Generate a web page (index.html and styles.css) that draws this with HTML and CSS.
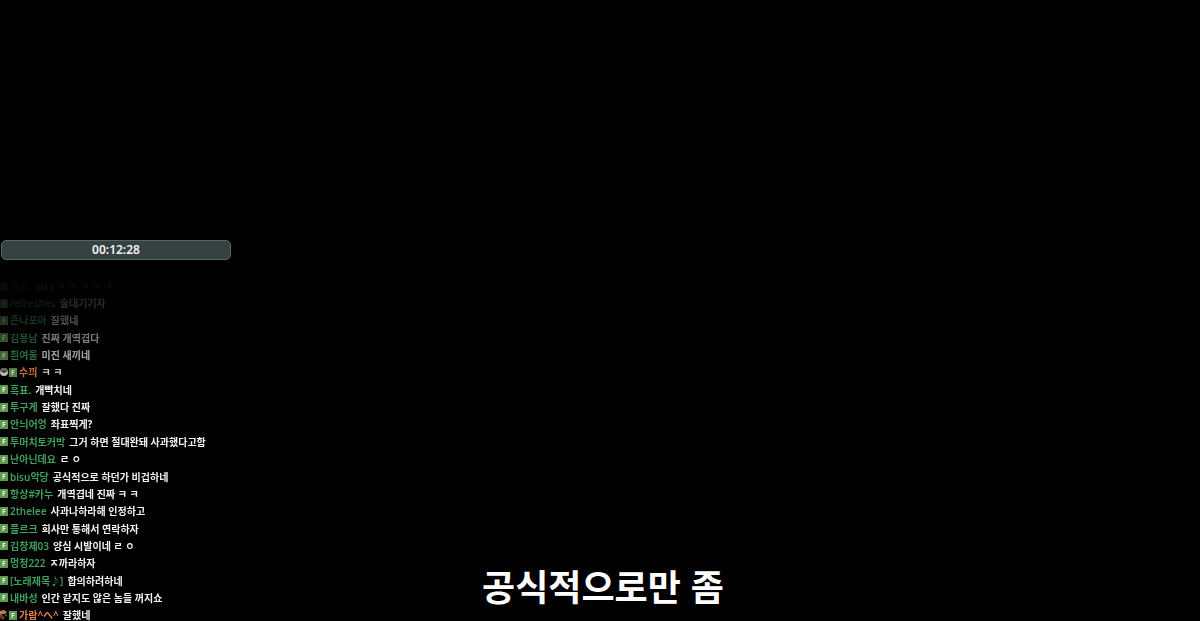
FILE: index.html
```html
<!DOCTYPE html>
<html lang="ko">
<head>
  <meta charset="UTF-8">
  <title>방송 채팅</title>
  <link rel="stylesheet" href="styles.css">
</head>

<body>
  <div class="screen">
    <aside class="overlay">
      <div class="timer">00:12:28</div>

      <ul class="chat">
        <li><i class="fan">F</i><span class="name">흑표.</span><span class="msg">아니 ㅋ ㅋ ㅋ ㅋ ㅋ</span></li>
        <li><i class="fan">F</i><span class="name">refreshes</span><span class="msg">술대기기자</span></li>
        <li><i class="fan">F</i><span class="name">존나포아</span><span class="msg">잘했네</span></li>
        <li><i class="fan">F</i><span class="name">김봉남</span><span class="msg">진짜 개역겹다</span></li>
        <li><i class="fan">F</i><span class="name">흰여울</span><span class="msg">미진 새끼네</span></li>
        <li>
          <svg class="badge" viewBox="0 0 9 10">
            <circle cx="4" cy="5" r="4" fill="#d8d4cc"/>
            <path d="M0 4Q4 7 8 4L7 2Q4 0 1 2Z" fill="#77736e"/>
            <path d="M2 4L4 6L6 4Z" fill="#322e2b"/>
          </svg>
          <i class="fan">F</i><span class="name sub">수끠</span><span class="msg">ㅋ ㅋ</span>
        </li>
        <li><i class="fan">F</i><span class="name">흑표.</span><span class="msg">개빡치네</span></li>
        <li><i class="fan">F</i><span class="name">투구게</span><span class="msg">잘했다 진짜</span></li>
        <li><i class="fan">F</i><span class="name">안늬어엉</span><span class="msg">좌표찍게?</span></li>
        <li><i class="fan">F</i><span class="name">투머치토커박</span><span class="msg">그거 하면 절대완돼 사과했다고함</span></li>
        <li><i class="fan">F</i><span class="name">난아닌데요</span><span class="msg">ㄹ ㅇ</span></li>
        <li><i class="fan">F</i><span class="name">bisu악당</span><span class="msg">공식적으로 하던가 비겁하네</span></li>
        <li><i class="fan">F</i><span class="name">항상#카누</span><span class="msg">개역겹네 진짜 ㅋ ㅋ</span></li>
        <li><i class="fan">F</i><span class="name">2thelee</span><span class="msg">사과나하라해 인정하고</span></li>
        <li><i class="fan">F</i><span class="name">플르크</span><span class="msg">회사만 통해서 연락하자</span></li>
        <li><i class="fan">F</i><span class="name">김창제03</span><span class="msg">양심 시발이네 ㄹ ㅇ</span></li>
        <li><i class="fan">F</i><span class="name">멍청222</span><span class="msg">ㅈ까라하자</span></li>
        <li><i class="fan">F</i><span class="name">[노래제목♪]</span><span class="msg">합의하려하네</span></li>
        <li><i class="fan">F</i><span class="name">내바성</span><span class="msg">인간 같지도 않은 놈들 꺼지쇼</span></li>
        <li>
          <svg class="badge" viewBox="0 0 9 10">
            <path d="M0 1L4 0L7 2L5 4L2 4L0 6Z" fill="#c47a43"/>
            <path d="M0 5L3 5L5 8L3 10L0 8Z" fill="#5e3b22"/>
            <path d="M5 4L7 5L6 7Z" fill="#8c8a7c"/>
          </svg>
          <i class="fan">F</i><span class="name sub">가람^ヘ^</span><span class="msg">잘했네</span>
        </li>
      </ul>
    </aside>

    <p class="caption">공식적으로만 좀</p>
  </div>
</body>
</html>
```

FILE: styles.css
```css
body {
  margin: 0;
  background-color: #000;
  color: #f2f2f2;
  font-family: "Noto Sans", "Noto Sans CJK KR", sans-serif;
}

.screen {
  display: grid;
  grid-template-columns: 232px 1fr 232px;
  height: 100vh;
  overflow: hidden;
}

.overlay {
  display: flex;
  flex-direction: column;
  min-height: 0;
  padding-top: 240px;
}

.timer {
  box-sizing: border-box;
  flex: none;
  height: 20px;
  margin: 0 1px;
  border: 1px solid #53686a;
  border-radius: 5px;
  background-color: #364142;
  font-size: 12px;
  font-weight: 600;
  line-height: 18px;
  text-align: center;
}

/* older messages fade out towards the top */
.chat {
  flex: 1;
  display: grid;
  grid-auto-rows: 1fr;
  margin: 17px 0 -3px;
  padding: 0;
  list-style: none;
  font-size: 10px;
  line-height: 14px;
  white-space: nowrap;
  -webkit-mask-image: linear-gradient(transparent, rgba(0,0,0,0.2) 32px, #000 110px);
  mask-image: linear-gradient(transparent, rgba(0,0,0,0.2) 32px, #000 110px);
}

.chat li {
  display: flex;
  align-items: center;
  min-height: 0;
}

.badge {
  flex: none;
  width: 9px;
  height: 10px;
}

.fan {
  flex: none;
  width: 8px;
  height: 9px;
  margin-right: 2px;
  background-color: #5c9a50;
  color: #e4f2d8;
  font-size: 7px;
  font-style: normal;
  font-weight: 700;
  line-height: 9px;
  text-align: center;
}

.name {
  margin-right: 4px;
  color: #3f9f5d;
  font-weight: 600;
}

.name.sub {
  color: #e5824a;
}

.msg {
  font-weight: 700;
}

.caption {
  align-self: end;
  margin: 0 0 10px 6px;
  color: #fff;
  font-family: "Noto Sans CJK KR", sans-serif;
  font-size: 36px;
  font-weight: 700;
  line-height: 52px;
  text-align: center;
}
```
